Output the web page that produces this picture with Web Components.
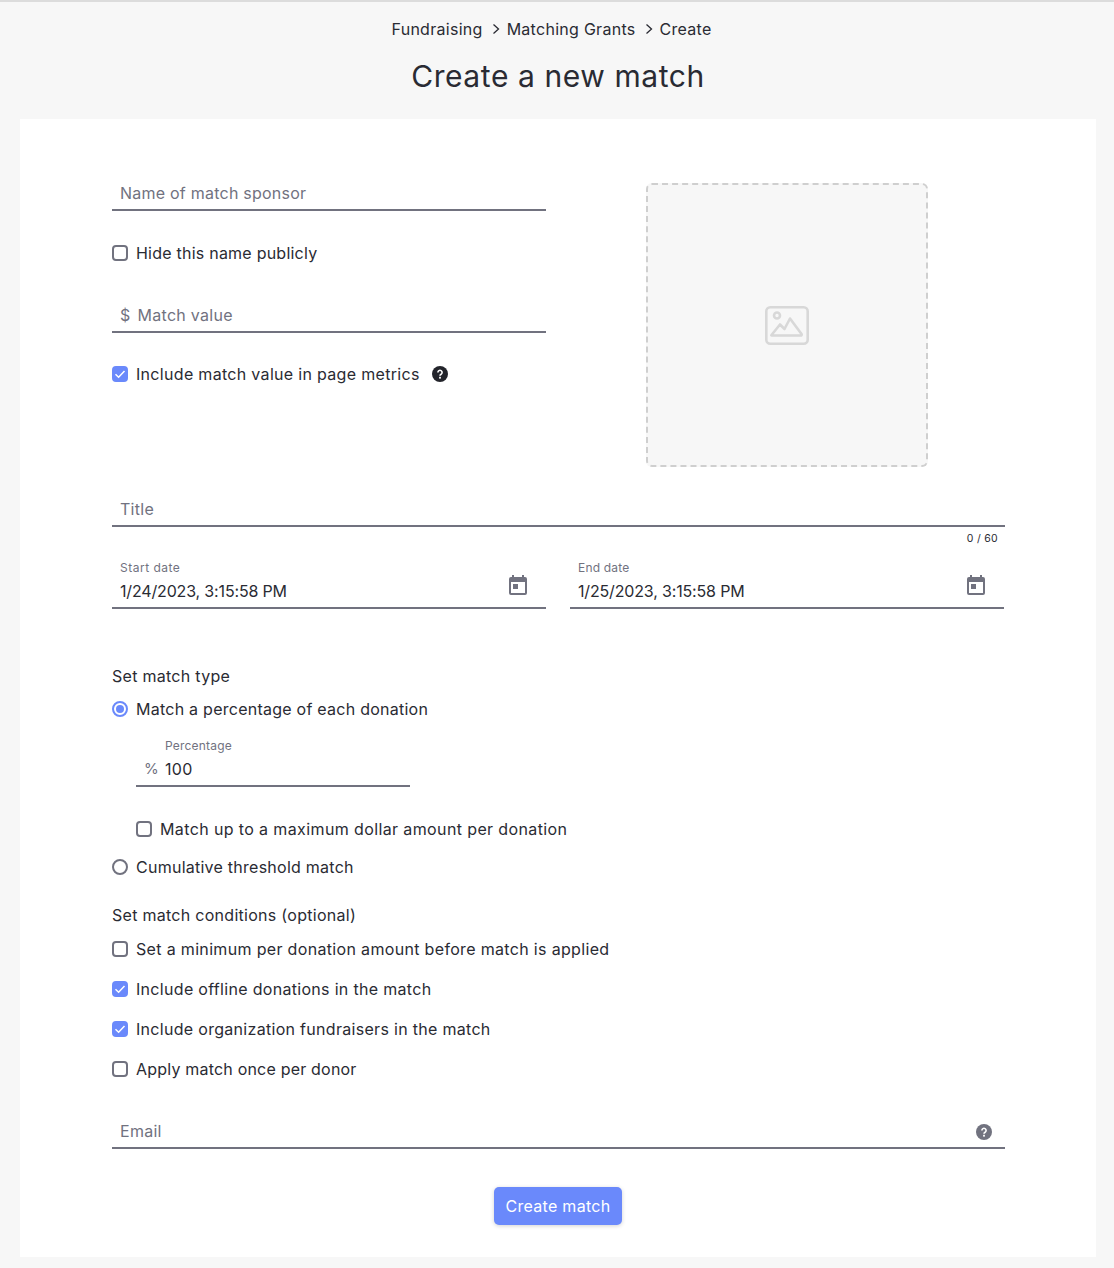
<!DOCTYPE html>
<html lang="en"><head><meta charset="utf-8"><title>Create a new match</title>
<style>
html,body{margin:0;padding:0}
body{background:#f7f7f7;color:#2a2b33;font-family:Inter,"Noto Sans",sans-serif;font-size:16px;letter-spacing:.28px}
</style></head><body>
<template id="t-page"><style>
:host{display:block;border-top:2px solid #dcdcdc;padding:0 18px 11px 20px}
.head{height:117px;display:flex;flex-direction:column;align-items:center}
.crumbs{display:flex;align-items:center;height:20px;margin:17px 13px 0 0;line-height:20px}
.crumbs svg{width:8px;height:12px;margin:0 7px 0 9px}
h1{margin:17px 0 0;font-size:30px;line-height:40px;font-weight:400;letter-spacing:.58px}
.card{background:#fff;height:1138px;box-sizing:border-box;padding:58px 92px 0}
</style><div class="head"><nav class="crumbs"><span>Fundraising</span><svg viewBox="0 0 8 12"><path d="M1.5 1.5 6.5 6l-5 4.5" fill="none" stroke="#2a2b33" stroke-width="1.3"/></svg><span>Matching Grants</span><svg viewBox="0 0 8 12"><path d="M1.5 1.5 6.5 6l-5 4.5" fill="none" stroke="#2a2b33" stroke-width="1.3"/></svg><span>Create</span></nav><h1>Create a new match</h1></div><div class="card"><slot></slot></div></template>

<template id="t-field"><style>
:host{display:block;box-sizing:border-box;border-bottom:2px solid #71727f;position:relative;height:34px;padding:0 8px;color:#71727f}
:host([float]){height:50px}
.label{box-sizing:border-box;font-size:12px;line-height:16px;height:var(--label-h,16px);padding-top:var(--label-top,0);padding-left:var(--label-indent,0);letter-spacing:var(--label-ls,.2px);display:none;overflow:visible}
:host([float]) .label{display:block}
.row{display:flex;align-items:center;line-height:32px;height:32px}
.v{color:#2a2b33;letter-spacing:var(--value-ls,.28px)}
.pre{margin-right:var(--pre-gap,7px);font-size:var(--pre-size,16px)}
.icon{position:absolute;right:0;top:0;display:flex}
</style><div class="label"></div><div class="row"><span class="pre"></span><span class="t"></span></div><div class="icon"><slot></slot></div></template>

<template id="t-check"><style>
:host{display:flex;align-items:center;height:24px;line-height:24px}
.box{width:16px;height:16px;box-sizing:border-box;border:2px solid #71727f;border-radius:4px;margin-right:8px;flex:none;display:flex}
:host([checked]) .box{background:#6a89fb;border-color:#6a89fb}
svg{display:none;width:12px;height:12px}
:host([checked]) svg{display:block}
:host([round]) .box{border-radius:50%;position:relative}
:host([round][checked]) .box{background:#fff}
:host([round][checked]) .box::after{content:"";position:absolute;left:2px;top:2px;width:8px;height:8px;border-radius:50%;background:#6a89fb}
:host([round][checked]) svg{display:none}
</style><span class="box"><svg viewBox="0 0 12 12"><path d="M1.5 6.3 4.6 9.2 10.5 3" fill="none" stroke="#fff" stroke-width="1.5"/></svg></span><slot></slot></template>

<template id="t-drop"><style>
:host{display:flex;align-items:center;justify-content:center;width:282px;height:284px;box-sizing:border-box;border:2px dashed #cfcfcf;border-radius:6px;background:#f7f7f7}
svg{width:44px;height:39px;display:block}
</style><svg viewBox="0 0 44 39" fill="none" stroke="#d8d8d8" stroke-width="2.6" stroke-linejoin="round"><rect x="1.3" y="1.3" width="41.4" height="36.4" rx="4"/><circle cx="12" cy="9.5" r="3"/><path d="M6.5 29 15 18.5l4.5 4.5L25 12.5 36.5 28c.6 1 0 1.5-1 1.5H7.5c-1 0-1.5-.2-1-.5Z"/></svg></template>

<template id="t-cal"><style>
:host{display:block;width:18px;height:20px;margin:16px 19px 0 0}
svg{display:block;width:18px;height:20px}
</style><svg viewBox="0 0 18 20"><path fill="#71727f" fill-rule="evenodd" d="M3 0h2v2h8V0h2v2h1a2 2 0 0 1 2 2v14a2 2 0 0 1-2 2H2a2 2 0 0 1-2-2V4a2 2 0 0 1 2-2h1ZM2 7v11h14V7Z"/><rect x="4" y="9" width="5" height="5" fill="#71727f"/></svg></template>

<template id="t-help"><style>
:host{display:block;width:16px;height:16px;color:#23242b}
svg{display:block;width:16px;height:16px}
</style><svg viewBox="0 0 16 16"><circle cx="8" cy="8" r="8" fill="currentColor"/><path d="M5.9 6.4a2.1 2.1 0 1 1 3.2 1.8c-.8.5-1.1.9-1.1 1.5" fill="none" stroke="#fff" stroke-width="1.6"/><rect x="7.1" y="10.8" width="1.8" height="1.8" fill="#fff"/></svg></template>

<script>
const tpl=id=>document.getElementById(id).content.cloneNode(true);
class Base extends HTMLElement{constructor(){super();this.attachShadow({mode:"open"}).appendChild(tpl(this.constructor.tid));}}
class XPage extends Base{static tid="t-page"}
class XCheck extends Base{static tid="t-check"}
class XDrop extends Base{static tid="t-drop"}
class XCal extends Base{static tid="t-cal"}
class XHelp extends Base{static tid="t-help"}
class XField extends Base{static tid="t-field";
 connectedCallback(){const s=this.shadowRoot,l=this.getAttribute("label"),v=this.getAttribute("value"),p=this.getAttribute("placeholder"),pre=this.getAttribute("prefix");
  s.querySelector(".label").textContent=l||"";
  const t=s.querySelector(".t");t.textContent=v||p||"";if(v)t.className="t v";
  const e=s.querySelector(".pre");if(pre)e.textContent=pre;else e.remove();}}
customElements.define("x-page",XPage);customElements.define("x-check",XCheck);customElements.define("x-drop",XDrop);customElements.define("x-cal",XCal);customElements.define("x-help",XHelp);customElements.define("x-field",XField);
class XForm extends HTMLElement{constructor(){super();this.attachShadow({mode:"open"}).innerHTML=`<style>
:host{display:block}
.top{display:grid;grid-template-columns:434px 434px;column-gap:24px}
.left{display:flex;flex-direction:column}
.drop{justify-self:center;margin-top:6px}
.dates{display:grid;grid-template-columns:434px 434px;column-gap:24px;--value-ls:-.16px;--label-top:1px}
.count{font-size:10.5px;line-height:14px;text-align:right;padding-right:6px;margin-top:5px;letter-spacing:.3px}
.h{line-height:24px;height:24px}
.center{display:flex;justify-content:center}
button{all:unset;box-sizing:border-box;width:128px;height:38px;background:#6a89fb;color:#fff;border-radius:5px;text-align:center;line-height:38px;font-size:16px;box-shadow:0 1px 4px rgba(0,0,0,.18)}
</style>
<div class="top"><div class="left">
<x-field placeholder="Name of match sponsor" style="letter-spacing:.23px"></x-field>
<x-check style="margin-top:30px;letter-spacing:.23px">Hide this name publicly</x-check>
<x-field prefix="$" placeholder="Match value" style="margin-top:34px"></x-field>
<x-check checked style="margin-top:29px;letter-spacing:.31px">Include match value in page metrics<x-help style="margin-left:12px"></x-help></x-check>
</div><x-drop class="drop"></x-drop></div>
<x-field placeholder="Title" style="margin:26px -1px 0 0"></x-field>
<div class="count">0 / 60</div>
<div class="dates" style="margin-top:13px">
<x-field float label="Start date" value="1/24/2023, 3:15:58 PM" style="--label-ls:.5px"><x-cal></x-cal></x-field>
<x-field float label="End date" value="1/25/2023, 3:15:58 PM"><x-cal></x-cal></x-field>
</div>
<div class="h" style="margin-top:55px">Set match type</div>
<x-check round checked style="margin-top:9px;letter-spacing:.25px">Match a percentage of each donation</x-check>
<x-field float label="Percentage" value="100" prefix="%" style="width:274px;height:49px;margin:17px 0 0 24px;--label-h:15px;--label-indent:21px;--pre-gap:6px;--pre-size:15px"></x-field>
<x-check style="margin:30px 0 0 24px;letter-spacing:.38px">Match up to a maximum dollar amount per donation</x-check>
<x-check round style="margin-top:14px;letter-spacing:.25px">Cumulative threshold match</x-check>
<div class="h" style="margin-top:24px">Set match conditions (optional)</div>
<x-check style="margin-top:10px;letter-spacing:.33px">Set a minimum per donation amount before match is applied</x-check>
<x-check checked style="margin-top:16px;letter-spacing:.31px">Include offline donations in the match</x-check>
<x-check checked style="margin-top:16px;letter-spacing:.3px">Include organization fundraisers in the match</x-check>
<x-check style="margin-top:16px;letter-spacing:.2px">Apply match once per donor</x-check>
<x-field placeholder="Email" style="margin:34px -1px 0 0"><x-help style="margin:9px 13px 0 0;color:#71727f"></x-help></x-field>
<div class="center" style="margin-top:38px"><button>Create match</button></div>`;}}
customElements.define("x-form",XForm);
</script>
<x-page><x-form></x-form></x-page>
</body></html>
